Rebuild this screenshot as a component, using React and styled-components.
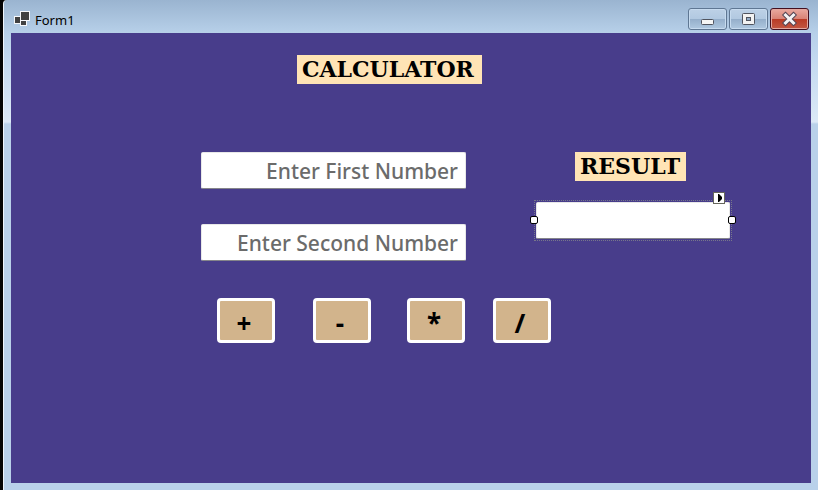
import React from "react";
import styled, { createGlobalStyle } from "styled-components";

const GlobalStyle = createGlobalStyle`
  * { box-sizing: border-box; }
  body { margin: 0; background: #050505; }
`;

const Window = styled.div`
  min-height: 100vh;
  display: flex;
  flex-direction: column;
  margin-left: 3px;
  padding: 0 7px 7px;
  border-left: 1px solid #eef5fc;
  border-top-left-radius: 4px;
  background:
    linear-gradient(#9ab4d0 0, #b7d0e9 33px, #c3d9f0 60px, #dce9f7 122px, #b9d1ea 124px, #b9d1ea 100%);
`;

const TitleBar = styled.header`
  height: 33px;
  flex: none;
  display: flex;
  align-items: flex-start;
  padding: 8px 2px 0 3px;
  gap: 4px;
`;

const AppIcon = styled.svg`
  width: 17px;
  height: 17px;
  margin-top: 3px;
`;

const Caption = styled.h1`
  flex: 1;
  margin: 3px 0 0;
  font: 400 13px/18px "Noto Sans", "Open Sans", sans-serif;
  color: #000;
`;

const WindowControls = styled.div`
  display: flex;
  gap: 2px;
`;

const ControlButton = styled.button`
  width: 39px;
  height: 22px;
  padding: 0;
  display: grid;
  place-items: center;
  border: 1px solid ${(p) => (p.$close ? "#43101f" : "#5f7793")};
  border-radius: 3px;
  box-shadow: inset 0 0 0 1px ${(p) => (p.$close ? "#e2a79f" : "#c7dbef")};
  background: ${(p) =>
    p.$close
      ? "linear-gradient(#e9a9a0 0, #d98376 48%, #b93a25 50%, #c35843 100%)"
      : "linear-gradient(#bdd1e6 0, #b2c9e1 48%, #94aeca 50%, #afc8e0 100%)"};
`;

const Glyph = styled.svg`
  display: block;
  width: 37px;
  height: 20px;
`;

const Client = styled.main`
  flex: 1;
  padding: 22px 0 40px;
  background: #483d8b;
`;

const Heading = styled.div`
  display: flex;
  justify-content: center;
  padding-right: 43px;
`;

const Label = styled.label`
  display: block;
  width: ${(p) => p.$width}px;
  height: 29px;
  margin: 0;
  padding-left: 5px;
  background: #ffe4b5;
  color: #000;
  font: 700 22px/29px "DejaVu Serif", "Liberation Serif", serif;
  white-space: nowrap;
`;

const FormGrid = styled.form`
  display: grid;
  grid-template-columns: 190fr 265fr 70fr 194fr 81fr;
  margin-top: 68px;
`;

const Operands = styled.div`
  grid-column: 2;
  display: grid;
  gap: 35px;
`;

const TextBox = styled.input`
  display: block;
  width: 100%;
  min-width: 0;
  height: 37px;
  padding: 0 7px;
  border: 1px solid #e8e8e8;
  border-bottom-color: #85858a;
  border-radius: 2px;
  outline: none;
  background: #fff;
  color: #222;
  font: 500 21px/32px "Noto Sans", "Open Sans", sans-serif;
  text-align: right;
  &::placeholder { color: #6b6b6b; opacity: 1; }
`;

const ResultPanel = styled.div`
  grid-column: 4;
  display: flex;
  flex-direction: column;
  align-items: flex-start;
  gap: 21px;
`;

const ResultLabel = styled(Label)`
  margin-left: 39px;
`;

const Selection = styled.div`
  position: relative;
  width: 100%;
  &::before {
    content: "";
    position: absolute;
    inset: -2px;
    border: 1px dotted #77778a;
    pointer-events: none;
  }
`;

const Handle = styled.span`
  position: absolute;
  top: 14px;
  ${(p) => p.$side}: -6px;
  width: 8px;
  height: 8px;
  border: 1px solid #000;
  border-radius: 2px;
  background: #fff;
`;

const TaskButton = styled.button`
  position: absolute;
  top: -10px;
  right: 5px;
  width: 12px;
  height: 12px;
  padding: 0;
  border: 1px solid #66665c;
  background: #fff;
  svg { display: block; width: 10px; height: 10px; }
`;

const Operators = styled.div`
  display: grid;
  grid-template-columns: 206fr 58fr 38fr 58fr 36fr 58fr 28fr 58fr 260fr;
  margin-top: 37px;
`;

const OperatorButton = styled.button`
  grid-column: ${(p) => p.$column};
  min-width: 0;
  height: 45px;
  padding: 4px 4px 0 0;
  border: 3px solid #fff;
  border-radius: 4px;
  background: #d2b48c;
  color: #000;
  font: 700 26px/32px "Noto Sans", "Open Sans", sans-serif;
`;

const operators = [
  { symbol: "+", name: "Add", column: 2 },
  { symbol: "-", name: "Subtract", column: 4 },
  { symbol: "*", name: "Multiply", column: 6 },
  { symbol: "/", name: "Divide", column: 8 },
];

export default function App() {
  return (
    <>
      <GlobalStyle />
      <Window>
        <TitleBar>
          <AppIcon viewBox="0 0 17 17" shapeRendering="crispEdges" aria-hidden="true">
            <path d="M6 0h10v10h-3v5H6v-2H0V5h6z" fill="#f5f7fa" />
            <path d="M7 1h8v8H7zM1 6h5v6H1zM7 10h5v4H7z" fill="#414141" />
          </AppIcon>
          <Caption>Form1</Caption>
          <WindowControls>
            <ControlButton type="button" aria-label="Minimize">
              <Glyph viewBox="0 0 37 20">
                <rect x="12.5" y="10.5" width="12" height="5" rx="1" fill="#f5f5f5" stroke="#50545f" />
              </Glyph>
            </ControlButton>
            <ControlButton type="button" aria-label="Maximize">
              <Glyph viewBox="0 0 37 20">
                <rect x="12.5" y="4.5" width="12" height="11" rx="1" fill="#f2f2f2" stroke="#50545f" />
                <rect x="16.5" y="8.5" width="4" height="3" fill="#91aac5" stroke="#50545f" />
              </Glyph>
            </ControlButton>
            <ControlButton type="button" aria-label="Close" $close>
              <Glyph viewBox="0 0 37 20">
                <path d="M14.5 6l8 8m0-8l-8 8" fill="none" stroke="#564654" strokeWidth="5" strokeLinecap="square" />
                <path d="M14.5 6l8 8m0-8l-8 8" fill="none" stroke="#f5f3f4" strokeWidth="3" strokeLinecap="square" />
              </Glyph>
            </ControlButton>
          </WindowControls>
        </TitleBar>
        <Client>
          <Heading>
            <Label as="h2" $width={185}>CALCULATOR</Label>
          </Heading>
          <FormGrid onSubmit={(e) => e.preventDefault()}>
            <Operands>
              <TextBox aria-label="First number" placeholder="Enter First Number" />
              <TextBox aria-label="Second number" placeholder="Enter Second Number" />
            </Operands>
            <ResultPanel>
              <ResultLabel htmlFor="result" $width={111}>RESULT</ResultLabel>
              <Selection>
                <TextBox id="result" readOnly />
                <Handle $side="left" />
                <Handle $side="right" />
                <TaskButton type="button" aria-label="Text box tasks">
                  <svg viewBox="0 0 10 10" aria-hidden="true">
                    <path d="M4 1h1l3 3v2L5 9H4z" fill="#000" />
                  </svg>
                </TaskButton>
              </Selection>
            </ResultPanel>
          </FormGrid>
          <Operators>
            {operators.map((o) => (
              <OperatorButton key={o.name} type="button" aria-label={o.name} $column={o.column}>
                {o.symbol}
              </OperatorButton>
            ))}
          </Operators>
        </Client>
      </Window>
    </>
  );
}
